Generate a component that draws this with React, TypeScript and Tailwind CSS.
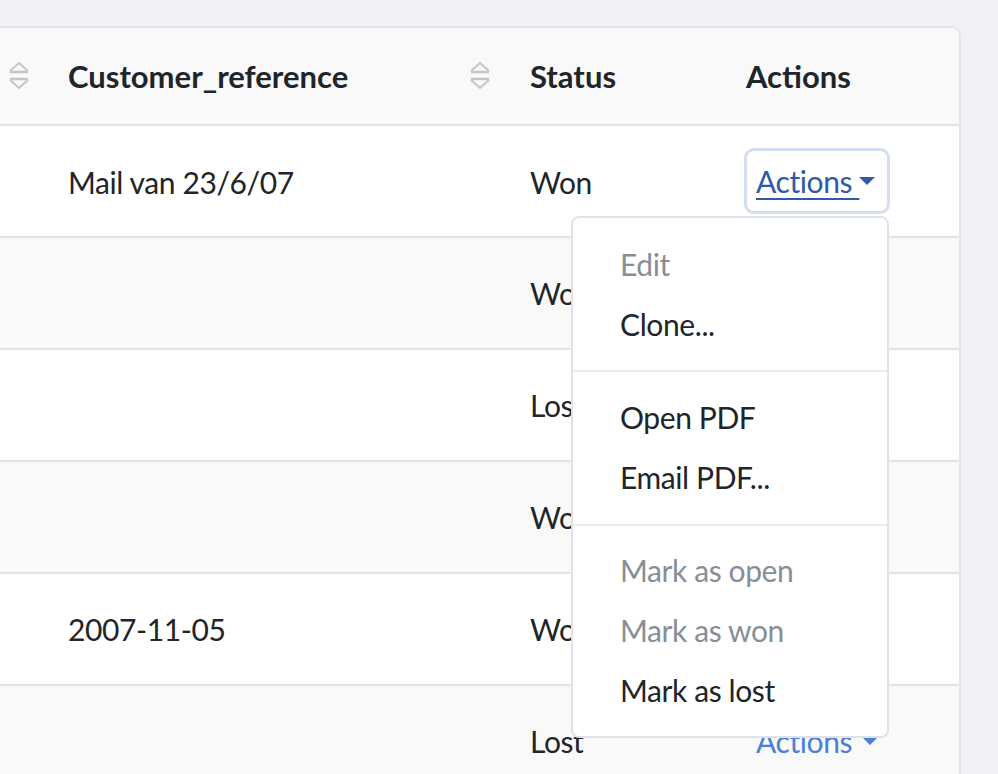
import React from 'react';

const font = { fontFamily: '"Lato", "Noto Sans", sans-serif' };

function SortIcon() {
  return (
    <svg width="22" height="30" viewBox="0 0 22 30" className="shrink-0">
      <polyline points="2,10 11,2 20,10" fill="none" stroke="#c6c6c6" strokeWidth="2" />
      <line x1="2" y1="11" x2="20" y2="11" stroke="#c6c6c6" strokeWidth="2.5" />
      <line x1="2" y1="18" x2="20" y2="18" stroke="#c6c6c6" strokeWidth="2.5" />
      <polyline points="2,19 11,27 20,19" fill="none" stroke="#c6c6c6" strokeWidth="2" />
    </svg>
  );
}

function Caret({ color }: { color: string }) {
  return (
    <svg width="16" height="8" viewBox="0 0 16 8" className="shrink-0">
      <polygon points="0,0 16,0 8,8" fill={color} />
    </svg>
  );
}

const rows = [
  { ref: 'Mail van 23/6/07', status: 'Won', open: true },
  { ref: '', status: 'Won' },
  { ref: '', status: 'Lost' },
  { ref: '', status: 'Won' },
  { ref: '2007-11-05', status: 'Won' },
  { ref: '', status: 'Lost', link: true },
];

function Menu() {
  const item = 'px-[47px] h-[60px] flex items-center whitespace-nowrap';
  return (
    <div className="absolute left-[-173px] top-[65px] w-[318px] bg-white border-2 border-[#dfe2e8] rounded-[8px] pt-[16px] pb-[16px] z-10">
      <div className={`${item} text-[#878e97]`}>Edit</div>
      <div className={`${item} text-[#212529]`}>Clone...</div>
      <div className="mt-[16px] mb-[15px] h-[2px] bg-[#e9ebef]" />
      <div className={`${item} text-[#212529]`}>Open PDF</div>
      <div className={`${item} text-[#212529]`}>Email PDF...</div>
      <div className="mt-[17px] mb-[14px] h-[2px] bg-[#e9ebef]" />
      <div className={`${item} text-[#878e97]`}>Mark as open</div>
      <div className={`${item} text-[#878e97]`}>Mark as won</div>
      <div className={`${item} text-[#212529]`}>Mark as lost</div>
    </div>
  );
}

export default function App() {
  return (
    <div className="w-[998px] h-[774px] bg-[#f1f2f7] overflow-hidden pt-[26px] text-[30px] tracking-[-0.4px] leading-[48px] text-[#212529]" style={font}>
      <div className="w-[961px] bg-white border-t-2 border-r-2 border-[#e2e4ea] rounded-tr-[10px]">
        <div className="flex h-[96px] bg-[#f9f9f9] items-center font-bold text-[31px] tracking-normal rounded-tr-[8px]">
          <div className="w-[36px] pl-[8px] flex items-center"><SortIcon /></div>
          <div className="w-[469px] pl-[32px] pr-[14px] flex items-center justify-between">
            <span>Customer_reference</span>
            <SortIcon />
          </div>
          <div className="w-[217px] pl-[25px]">Status</div>
          <div className="flex-1 pl-[24px]">Actions</div>
        </div>
        {rows.map((r, i) => (
          <div key={i} className={`flex h-[112px] border-t-2 border-[#e0e3e7] items-center ${i === 0 ? 'pt-[2px]' : ''} ${i % 2 === 1 ? 'bg-[#f9f9f9]' : 'bg-white'}`}>
            <div className="w-[36px]" />
            <div className="w-[469px] pl-[32px] whitespace-nowrap">{r.ref}</div>
            <div className="w-[217px] pl-[25px]">{r.status}</div>
            <div className="flex-1 pl-[22px]">
              {r.open && (
                <div className="relative inline-block">
                  <div className="flex items-center w-[146px] border-[3px] border-[#d3def0] rounded-[10px] pl-[9px] h-[66px] mt-[-3px] text-[#2f5aa6]">
                    <span className="underline underline-offset-[5px] decoration-2">Actions&nbsp;</span>
                    <Caret color="#2f5aa6" />
                  </div>
                  <Menu />
                </div>
              )}
              {r.link && (
                <div className="inline-flex items-center pl-[12px] text-[#4b7fd6]">
                  <span>Actions</span>
                  <span className="ml-[10px]"><Caret color="#4b7fd6" /></span>
                </div>
              )}
            </div>
          </div>
        ))}
      </div>
    </div>
  );
}
